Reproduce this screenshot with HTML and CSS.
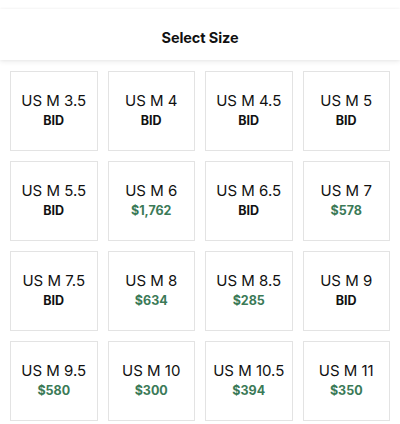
FILE: index.html
```html
<!DOCTYPE html>
<html>
<head>
<meta charset="utf-8">
<link rel="stylesheet" href="styles.css">
</head>
<body>
<div class="top"></div>
<header class="header"><h1 class="title">Select Size</h1></header>
<main class="grid">
  <div class="cell"><div class="size">US M 3.5</div><div class="bid">BID</div></div>
  <div class="cell"><div class="size">US M 4</div><div class="bid">BID</div></div>
  <div class="cell"><div class="size">US M 4.5</div><div class="bid">BID</div></div>
  <div class="cell"><div class="size">US M 5</div><div class="bid">BID</div></div>
  <div class="cell"><div class="size">US M 5.5</div><div class="bid">BID</div></div>
  <div class="cell"><div class="size">US M 6</div><div class="price">$1,762</div></div>
  <div class="cell"><div class="size">US M 6.5</div><div class="bid">BID</div></div>
  <div class="cell"><div class="size">US M 7</div><div class="price">$578</div></div>
  <div class="cell"><div class="size">US M 7.5</div><div class="bid">BID</div></div>
  <div class="cell"><div class="size">US M 8</div><div class="price">$634</div></div>
  <div class="cell"><div class="size">US M 8.5</div><div class="price">$285</div></div>
  <div class="cell"><div class="size">US M 9</div><div class="bid">BID</div></div>
  <div class="cell"><div class="size">US M 9.5</div><div class="price">$580</div></div>
  <div class="cell"><div class="size">US M 10</div><div class="price">$300</div></div>
  <div class="cell"><div class="size">US M 10.5</div><div class="price">$394</div></div>
  <div class="cell"><div class="size">US M 11</div><div class="price">$350</div></div>
</main>
</body>
</html>
```

FILE: styles.css
```css
* { box-sizing: border-box; }
html, body { margin: 0; padding: 0; background: #fff; }
body {
  width: 400px;
  height: 424px;
  overflow: hidden;
  font-family: Inter, "Noto Sans", sans-serif;
  color: #111;
}
.top { height: 9px; background: #fff; }
.header {
  height: 51px;
  padding-top: 5px;
  display: flex;
  align-items: center;
  justify-content: center;
  background: #fff;
  box-shadow: 0 0 3px rgba(0,0,0,0.06), 0 2px 5px rgba(0,0,0,0.07);
  position: relative;
  z-index: 1;
}
.title {
  margin: 0;
  font-size: 14.5px;
  font-weight: 700;
  letter-spacing: -0.1px;
  color: #111;
}
.grid {
  display: grid;
  grid-template-columns: repeat(4, 1fr);
  grid-auto-rows: 80px;
  gap: 10px;
  padding: 11px 10px 0;
}
.cell {
  border: 1px solid #e3e3e3;
  display: flex;
  flex-direction: column;
  align-items: center;
  justify-content: center;
}
.size {
  font-size: 15px;
  line-height: 20px;
  font-weight: 400;
  color: #111;
}
.bid, .price {
  font-size: 12.5px;
  line-height: 20px;
  font-weight: 700;
}
.bid { color: #111; }
.price { color: #3b7a57; }
```
